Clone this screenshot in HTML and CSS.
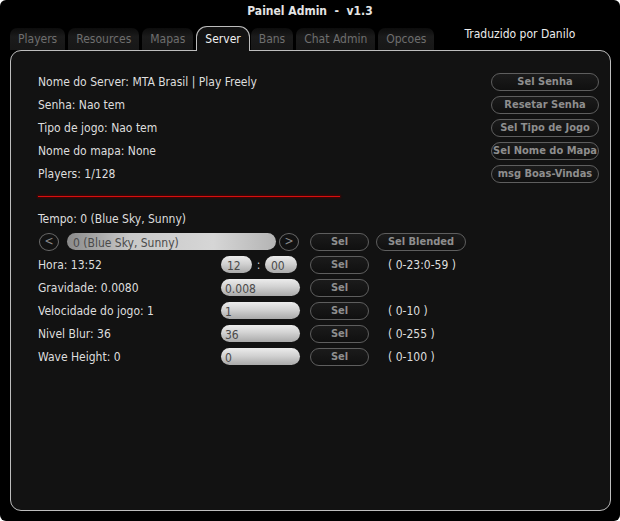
FILE: index.html
```html
<!DOCTYPE html>
<html lang="pt">

<head>
    <meta charset="UTF-8">
    <meta name="viewport" content="width=device-width, initial-scale=1.0">
    <title>Painel Admin</title>
    <link rel="stylesheet" href="styles.css">
</head>

<body>

    <div class="window">
        <div class="titlebar">Painel Admin  -  v1.3</div>

        <div class="tabbar">
            <div class="tab">Players</div>
            <div class="tab">Resources</div>
            <div class="tab">Mapas</div>
            <div class="tab active">Server</div>
            <div class="tab">Bans</div>
            <div class="tab">Chat Admin</div>
            <div class="tab">Opcoes</div>
            <div class="credit">Traduzido por Danilo</div>
        </div>

        <div class="panel">
            <div class="info-row">
                <span>Nome do Server: MTA Brasil | Play Freely</span>
                <button class="btn btn-side">Sel Senha</button>
            </div>
            <div class="info-row">
                <span>Senha: Nao tem</span>
                <button class="btn btn-side">Resetar Senha</button>
            </div>
            <div class="info-row">
                <span>Tipo de jogo: Nao tem</span>
                <button class="btn btn-side">Sel Tipo de Jogo</button>
            </div>
            <div class="info-row">
                <span>Nome do mapa: None</span>
                <button class="btn btn-side">Sel Nome do Mapa</button>
            </div>
            <div class="info-row">
                <span>Players: 1/128</span>
                <button class="btn btn-side">msg Boas-Vindas</button>
            </div>

            <div class="divider"></div>

            <div class="row">
                <span>Tempo: 0 (Blue Sky, Sunny)</span>
            </div>
            <div class="row">
                <span class="arrow arrow-left">&lt;</span>
                <div class="pill slider">0 (Blue Sky, Sunny)</div>
                <span class="arrow arrow-right">&gt;</span>
                <button class="btn btn-sel">Sel</button>
                <button class="btn btn-blended">Sel Blended</button>
            </div>
            <div class="row">
                <span class="label">Hora: 13:52</span>
                <div class="time">
                    <span class="pill pill-hour">12</span>
                    <span class="colon">:</span>
                    <span class="pill pill-min">00</span>
                </div>
                <button class="btn btn-sel">Sel</button>
                <span class="range">( 0-23:0-59 )</span>
            </div>
            <div class="row">
                <span class="label">Gravidade: 0.0080</span>
                <span class="pill pill-input">0.008</span>
                <button class="btn btn-sel">Sel</button>
            </div>
            <div class="row">
                <span class="label">Velocidade do jogo: 1</span>
                <span class="pill pill-input">1</span>
                <button class="btn btn-sel">Sel</button>
                <span class="range">( 0-10 )</span>
            </div>
            <div class="row">
                <span class="label">Nivel Blur: 36</span>
                <span class="pill pill-input">36</span>
                <button class="btn btn-sel">Sel</button>
                <span class="range">( 0-255 )</span>
            </div>
            <div class="row">
                <span class="label">Wave Height: 0</span>
                <span class="pill pill-input">0</span>
                <button class="btn btn-sel">Sel</button>
                <span class="range">( 0-100 )</span>
            </div>
        </div>
    </div>

</body>

</html>
```

FILE: styles.css
```css
html,
body {
    margin: 0;
    height: 100%;
    background-color: #ffffff;
    font-family: "DejaVu Sans Condensed", "DejaVu Sans", sans-serif;
    font-size: 12px;
}

.window {
    width: 620px;
    height: 521px;
    background-color: #000000;
    border-radius: 6px;
    overflow: hidden;
}

.titlebar {
    height: 22px;
    line-height: 22px;
    text-align: center;
    color: #e4e4e4;
    font-weight: bold;
    white-space: pre;
}

.tabbar {
    height: 28px;
    display: flex;
    align-items: flex-end;
    padding-left: 10px;
}

.tab {
    height: 22px;
    line-height: 23px;
    padding: 0 8px;
    margin-right: 3px;
    color: #6e6e6e;
    background: linear-gradient(#0c0c0c, #1b1b1b 40%, #171717);
    border-radius: 7px 7px 0 0;
}

.tab.active {
    position: relative;
    z-index: 1;
    height: 24px;
    line-height: 25px;
    margin-bottom: -1px;
    margin-right: 1px;
    color: #f0f0f0;
    background: #121212;
    border: 1px solid #bdbdbd;
    border-bottom: none;
    border-radius: 11px 11px 0 0;
}

.credit {
    align-self: flex-start;
    line-height: 24px;
    margin-left: 27px;
    color: #ececec;
}

.panel {
    box-sizing: border-box;
    width: 601px;
    height: 461px;
    margin-left: 10px;
    padding: 19px 11px 0 27px;
    background-color: #121212;
    border: 1px solid #bdbdbd;
    border-radius: 11px;
    color: #dedede;
}

.info-row,
.row {
    height: 23px;
    display: flex;
    align-items: center;
}

.info-row {
    justify-content: space-between;
}

.divider {
    width: 302px;
    height: 1px;
    margin: 11px 0 10px;
    background-color: #d80f0f;
    box-shadow: 0 0 2px 1px #4a0404;
}

.btn {
    box-sizing: border-box;
    height: 18px;
    padding: 0;
    font-family: inherit;
    font-size: 11px;
    font-weight: bold;
    color: #8e8e8e;
    background: linear-gradient(#1b1b1b, #101010);
    border: 1px solid #5e5e5e;
    border-radius: 9px;
    white-space: nowrap;
}

.btn-side {
    width: 108px;
}

.btn-sel {
    width: 59px;
}

.btn-blended {
    width: 90px;
    margin-left: 7px;
}

.label {
    width: 183px;
}

.pill {
    box-sizing: border-box;
    height: 17px;
    padding: 3px 0 0 4px;
    line-height: 15px;
    color: #4a4a4a;
    background: linear-gradient(#ececec, #d2d2d2 45%, #a9a9a9);
    border-radius: 9px;
    overflow: hidden;
    white-space: nowrap;
}

.pill-input {
    width: 79px;
    margin-right: 10px;
}

.time {
    width: 76px;
    margin-right: 13px;
    display: flex;
    align-items: center;
}

.pill-hour {
    width: 31px;
    padding-left: 6px;
}

.pill-min {
    width: 32px;
    padding-left: 6px;
}

.colon {
    flex: 1;
    text-align: center;
    color: #d0d0d0;
}

.slider {
    width: 209px;
    margin: 0 3px 0 8px;
    padding-left: 6px;
    background: linear-gradient(90deg, #8a8a8a, #c8c8c8 30%, #d6d6d6 70%, #b4b4b4);
}

.arrow {
    box-sizing: border-box;
    width: 20px;
    height: 18px;
    line-height: 15px;
    text-align: center;
    color: #8a8a8a;
    border: 1px solid #6a6a6a;
    border-radius: 50%;
}

.arrow-left {
    margin-left: 1px;
}

.arrow-right {
    margin-right: 11px;
}

.range {
    margin-left: 19px;
    color: #dedede;
}
```
